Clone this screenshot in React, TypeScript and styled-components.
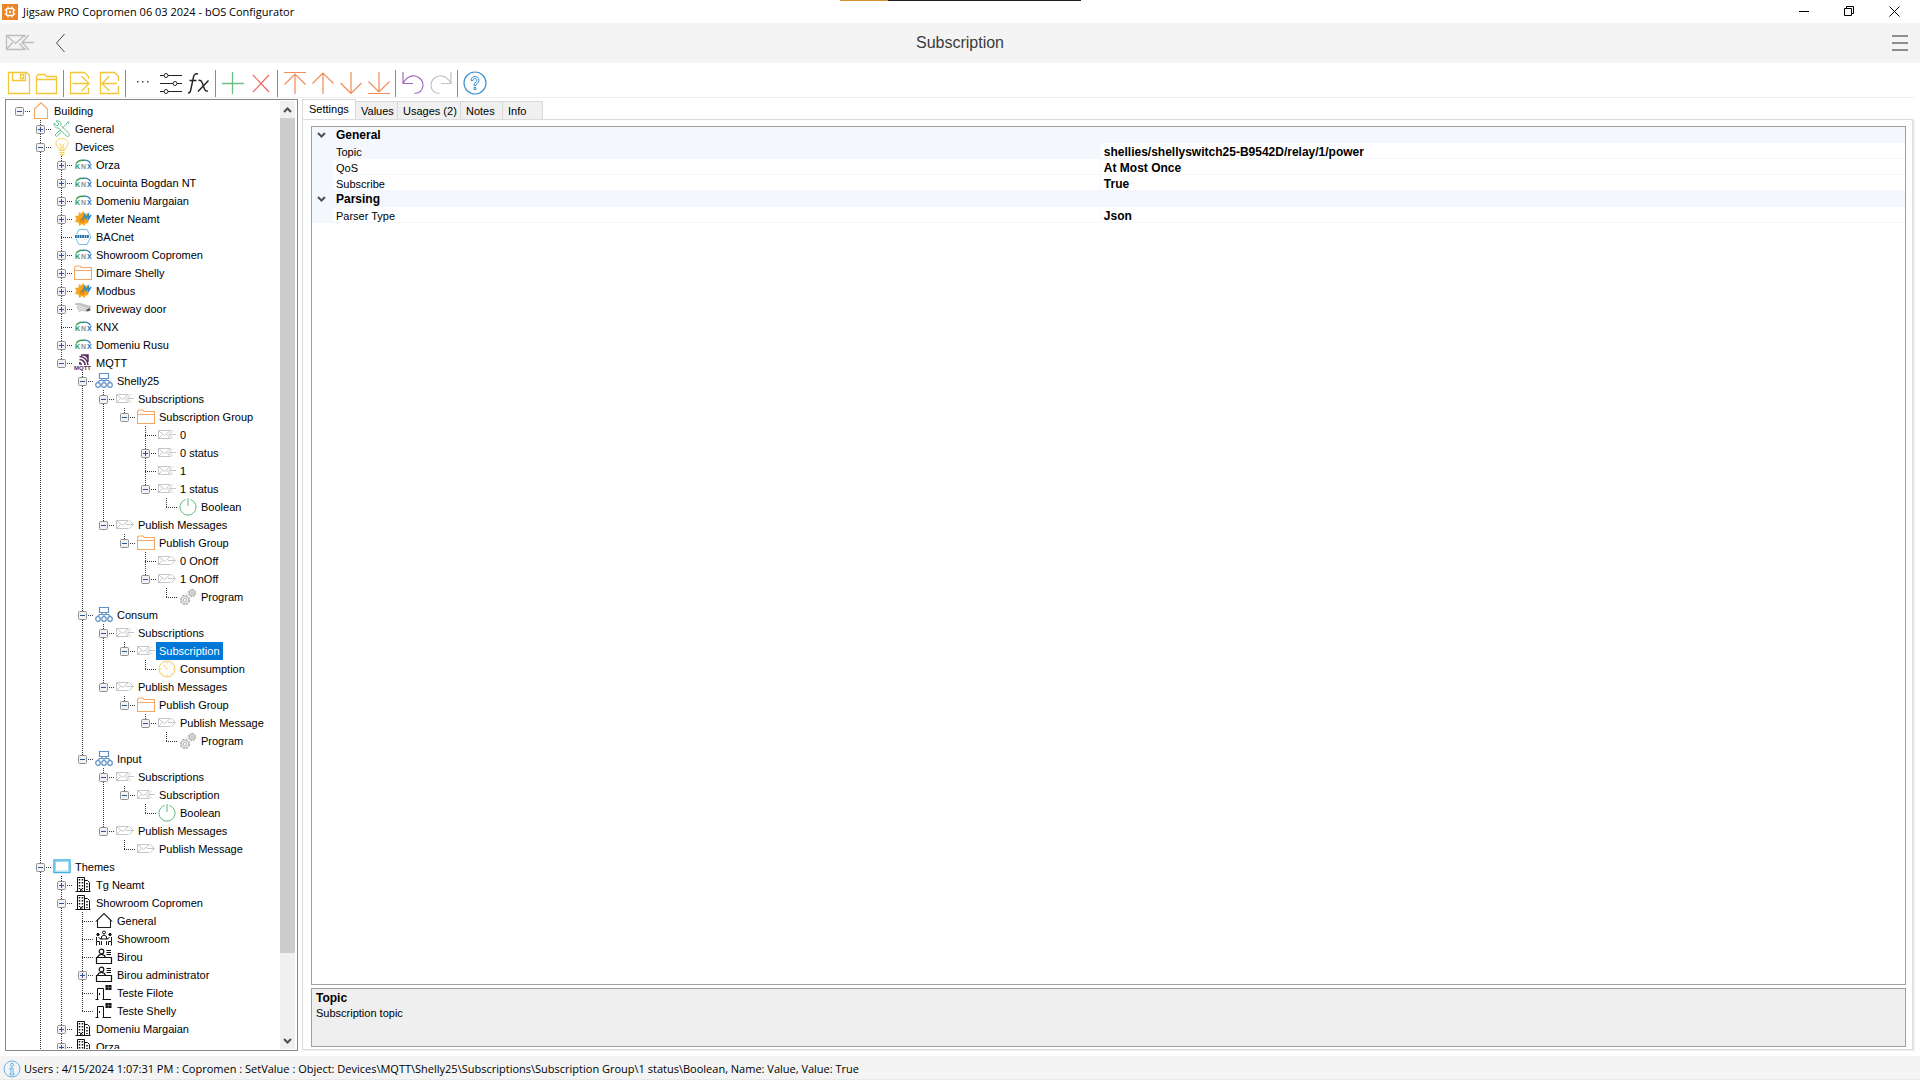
import React, { useState } from "react";
import styled, { createGlobalStyle, css } from "styled-components";

const uiFont = '"Liberation Sans", Arial, sans-serif';
const shellFont = '"Open Sans", "Noto Sans", sans-serif';

const GlobalStyle = createGlobalStyle`
  *, *::before, *::after { box-sizing: border-box; }
  html, body { margin: 0; padding: 0; }
  body { background: #ffffff; color: #000000; font-family: ${uiFont}; font-size: 11px; }
  button { font: inherit; color: inherit; background: none; border: 0; padding: 0; margin: 0; }
  ul { list-style: none; margin: 0; padding: 0; }
  svg { display: block; flex: none; }
`;

/* ---------- icons ---------- */

const Line = styled.svg<{ $color: string; $w?: number }>`
  fill: none;
  stroke: ${(p) => p.$color};
  stroke-width: ${(p) => p.$w ?? 1};
`;

const orange = "#f5a864";
const yellow = "#f4c636";
const arrow = "#f08b57";

const AppLogo = () => (
  <svg width="16" height="16" viewBox="0 0 16 16">
    <rect width="16" height="16" fill="#ee8322" />
    <rect x="4.5" y="4.5" width="7" height="7" rx="1" fill="none" stroke="#fff" strokeWidth="1.5" />
    <rect x="7" y="7" width="2" height="2" fill="#fff" />
    <path d="M6 2.5v2M10 2.5v2M6 11.5v2M10 11.5v2M2.5 6h2M2.5 10h2M11.5 6h2M11.5 10h2" stroke="#fff" strokeWidth="1.2" />
  </svg>
);

const MailInLarge = () => (
  <Line $color="#bdbdbd" $w={1.3} width="30" height="20" viewBox="0 0 30 20">
    <path d="M20 4V2.500H1.500v14H20V15M1.500 2.500l9 8 9-8M1.500 16.500l6-7M19.500 16.500l-5-6" />
    <path d="M29 9.500H18M24 2l-7 7.500 7 7.500" />
  </Line>
);

const BackChevron = () => (
  <Line $color="#4a4a4a" width="12" height="20" viewBox="0 0 12 20">
    <path d="M9.500 1L1.500 10l8 9" />
  </Line>
);

const MenuBars = () => (
  <Line $color="#8d8d8d" $w={2} width="16" height="18" viewBox="0 0 16 18">
    <path d="M0 2h16M0 9h16M0 16h16" />
  </Line>
);

const Minimize = () => (
  <Line $color="#000" width="11" height="11" viewBox="0 0 11 11"><path d="M0 5.500h10" /></Line>
);
const Restore = () => (
  <Line $color="#000" width="11" height="11" viewBox="0 0 11 11"><path d="M.5 2.500h7v7h-7zM2.500 2.500v-2h7v7h-2" /></Line>
);
const Close = () => (
  <Line $color="#000" width="11" height="11" viewBox="0 0 11 11"><path d="M.5.5l10 10M10.500.5l-10 10" /></Line>
);

/* toolbar icons share a 24px box */
const tb = { width: 24, height: 24, viewBox: "0 0 24 24" };

const SaveIcon = () => (
  <Line $color={yellow} $w={1.3} {...tb}>
    <path d="M1.500 1.500h18l3 3v18h-21z" />
    <path d="M5.500 1.500v8h13v-8M5.500 9.500h13M13.500 3.500h3v4h-3z" />
  </Line>
);
const OpenIcon = () => (
  <Line $color={yellow} $w={1.3} {...tb}>
    <path d="M1.500 22.500V5.500l2-2h6l2 2h10v17zM1.500 8.500h20" />
  </Line>
);
const ExportIcon = () => (
  <Line $color={yellow} $w={1.3} {...tb}>
    <path d="M19.500 8V5.500l-4-4h-14v21h18V17M3.500 12.500h16M12.500 5l7.500 7.500-7.500 7.500" />
  </Line>
);
const ImportIcon = () => (
  <Line $color={yellow} $w={1.3} {...tb}>
    <path d="M21.500 10V5.500l-4-4h-14v21h18V15M20 12.500H5M12.500 5L5 12.500l7.500 7.500" />
  </Line>
);
const DotsIcon = () => (
  <svg {...tb}><path d="M6 10h1.500v1.500H6zM11 10h1.500v1.500H11zM16 10h1.500v1.500H16z" fill="#444" /></svg>
);
const SlidersIcon = () => (
  <Line $color="#222" {...tb}>
    <path d="M1 4.500h4M9 4.500h14M1 12.500h13M18 12.500h5M1 20.500h4M9 20.500h14" />
    <circle cx="7" cy="4.500" r="2" /><circle cx="16" cy="12.500" r="2" /><circle cx="7" cy="20.500" r="2" />
  </Line>
);
const FxIcon = () => (
  <Line $color="#222" {...tb} $w={1.4}>
    <path d="M11 3c-2.500-1-4 .5-4.500 3L3.500 20c-.3 1.500-1 2-2.500 2M2.500 9.500h7" />
    <path d="M11.500 9.500c2-.6 3 .2 3.600 2l2.400 6.500c.7 2 1.700 2.500 3.500 2M21.500 9.500L11 20.500" />
  </Line>
);
const PlusIcon = () => (
  <Line $color="#67c07f" $w={1.3} {...tb}><path d="M11.500 1v22M1 12.500h22" /></Line>
);
const DeleteIcon = () => (
  <Line $color="#ec6155" $w={1.1} {...tb}><path d="M4 4l16 17M20 4L4 21" /></Line>
);
const TopIcon = () => (
  <Line $color={arrow} $w={1.200} {...tb}><path d="M1 1.500h22M12 23V3M1.500 13.500L12 3l10.500 10.500" /></Line>
);
const UpIcon = () => (
  <Line $color={arrow} $w={1.200} {...tb}><path d="M12 23V2M1.500 12.500L12 2l10.500 10.500" /></Line>
);
const DownIcon = () => (
  <Line $color={arrow} $w={1.200} {...tb}><path d="M12 1v21.500M1.500 12L12 22.500 22.500 12" /></Line>
);
const BottomIcon = () => (
  <Line $color={arrow} $w={1.200} {...tb}><path d="M1 22.500h22M12 1v20M1.500 10.500L12 21l10.500-10.500" /></Line>
);
const UndoIcon = () => (
  <Line $color="#9d6cbc" $w={1.200} {...tb}>
    <path d="M2 1v11.500h10M2 12.500C5 7 9 4 14 5c5 1 8.500 5 8 10-.5 4-3 7-8.500 7.500" />
  </Line>
);
const RedoIcon = () => (
  <Line $color="#c2c2c2" $w={1.200} {...tb}>
    <path d="M22 1v11.500H12M22 12.500C19 7 15 4 10 5c-5 1-8.500 5-8 10 .5 4 3 7 8.500 7.500" />
  </Line>
);
const HelpIcon = () => (
  <Line $color="#3f93d1" $w={1.200} {...tb}>
    <circle cx="12" cy="12" r="11" />
    <path d="M8 9.500c0-2.500 1.700-4 4-4s4 1.500 4 3.800c0 2.700-3 3-3 5.200h-2c0-3.500 3-3.500 3-5.200 0-1-.8-1.800-2-1.800s-2 .8-2 2zM11 16.500h2v2h-2z" strokeWidth="1" />
  </Line>
);
const InfoIcon = () => (
  <Line $color="#6db3e4" width="18" height="18" viewBox="0 0 18 18">
    <circle cx="9" cy="9" r="8" />
    <circle cx="9" cy="4.800" r="1.500" />
    <path d="M7 8h3v5.500h1v1.500H7v-1.500h1V9.500H7z" />
  </Line>
);

/* tree icons share an 18px box */
const tr = { width: 18, height: 18, viewBox: "0 0 18 18" };

const Home = () => (
  <Line $color={orange} $w={1.100} {...tr}><path d="M2.500 16.500V7L9 .8 15.500 7v9.500z" /></Line>
);
const House = () => (
  <Line $color="#222" $w={1.100} {...tr}><path d="M2.500 15.500V9H1.500L9 1.500 16.500 9h-1v6.500z" /></Line>
);
const Tools = () => (
  <Line $color="#62c492" {...tr}>
    <path d="M1 3l3 3 2-2-3-3c3-.8 5.500 1 5 4.500l8 8c1.500 2-1 4-2.700 2.500L5.500 8C2.500 8.500.5 6 1 3z" />
    <path d="M16.500 1.500l-2.500 1-1 2-4 4M8 10l-2 1-4 4 1.500 1.500 4.500-4M14 2l2 2" />
  </Line>
);
const Bulb = () => (
  <Line $color="#f8cf50" {...tr}>
    <path d="M6.500 12.500c0-3-3.500-3.500-3.500-7C3 2.500 5.500.5 9 .5s6 2 6 5c0 3.500-3.500 4-3.500 7zM6.500 14.500h5M6.500 16.500h5M8 17.500h2M8 12V7L6.500 5.500M10 12V7l1.500-1.500" />
  </Line>
);
const LogoText = styled.text<{ $size: number }>`
  font-family: ${uiFont};
  font-size: ${(p) => p.$size}px;
  font-weight: 700;
`;
const Knx = () => (
  <svg {...tr}>
    <path d="M2 7.500C4 4.500 7 3.800 10 4.500" fill="none" stroke="#3c9a55" strokeWidth="1.300" />
    <path d="M9 4.300c3.500-.6 6 .5 7.500 3.200" fill="none" stroke="#2c7fb5" strokeWidth="1.300" />
    <LogoText $size={7} x="1" y="13" fill="#2f9148">K</LogoText>
    <LogoText $size={7} x="7" y="13" fill="#8d9297">N</LogoText>
    <LogoText $size={7} x="13" y="13" fill="#1f6fb0">X</LogoText>
  </svg>
);
const Modbus = () => (
  <svg {...tr}>
    <path d="M5 2l2 1.500L9 1l1.500 3L14 3l-.5 3.500 3 1.500-2.500 2 .5 3-3 .5L10.500 16 8 14l-3 2-.5-3.500L1 12l1.500-3L1 6l3.500-.5z" fill="#f5a623" />
    <circle cx="8" cy="10" r="2.500" fill="#e08a14" />
    <path d="M9 9.500l1.500-5 1.500 4 2.500-4v4.500l2.500-4" fill="none" stroke="#2b8fd0" strokeWidth="1.500" />
  </svg>
);
const Bacnet = () => (
  <svg {...tr}>
    <path d="M5 1.500h8L17 9l-4 7.500H5L1 9z" fill="#fff" stroke="#6cbfea" />
    <rect x="0" y="6" width="15" height="5" fill="#fff" />
    <path d="M1 8.500h14" stroke="#1f6fa8" strokeWidth="3" strokeDasharray="1.800 .6" />
  </svg>
);
const Folder = () => (
  <Line $color={orange} $w={1.1} {...tr}><path d="M.5 15.500v-12l1.500-1.500h4l1.500 1.500h10v12zM.5 6.500h17" /></Line>
);
const Camera = () => (
  <svg {...tr}>
    <path d="M1 4l4-.8 12 3.300-2 2z" fill="#c9c9c9" stroke="#aaa" strokeWidth=".6" />
    <path d="M3 6.500l9 2.500 1 2.500-9-2z" fill="#e2e2e2" stroke="#aaa" strokeWidth=".6" />
    <path d="M12 9.500l4-1.500.5 2.500-3 1z" fill="#555" />
    <path d="M7 10.500l-3 1.500" stroke="#c4c4c4" />
  </svg>
);
const Mqtt = () => (
  <svg {...tr}>
    <path d="M5 10.500V8a3 3 0 013 3z" fill="#5b2a60" />
    <path d="M5.500 5.500a5.500 5.500 0 015.500 5.500M5.500 2.500A8.500 8.500 0 0114 11M7 1h7v7" fill="none" stroke="#5b2a60" strokeWidth="1.500" />
    <path d="M10 1h4v4z" fill="#5b2a60" />
    <LogoText $size={6} x="0" y="16" fill="#5b2a60">MQTT</LogoText>
  </svg>
);
const Network = () => (
  <Line $color="#6190c8" $w={1.200} {...tr}>
    <path d="M4.500 1.500h9v5h-9zM7 7v1.500M11 7v1.500M2.500 10.500l2-2h9l2 2M9 8.500v2" />
    <circle cx="3" cy="13" r="2.300" /><circle cx="9" cy="13" r="2.300" /><circle cx="15" cy="13" r="2.300" />
  </Line>
);
const MailIn = () => (
  <Line $color="#c6c6c6" {...tr}>
    <path d="M12.500 4.500H.5v8h12M.5 4.500l6 5 6-5M.5 12.500l4-4M12 12.500l-3-4M18 8.500h-6M15 4.500l-4 4 4 4" />
  </Line>
);
const MailOut = () => (
  <Line $color="#c6c6c6" {...tr}>
    <path d="M12 4.500H.5v8h12M.5 4.500l6 5 6-5M.5 12.500l4-4M10 8.500h7M13.500 4.500l4 4-4 4" />
  </Line>
);
const Power = () => (
  <Line $color="#5fb67c" {...tr}><path d="M6.500 1.500a8 8 0 105 0M9 0v8" /></Line>
);
const Gauge = () => (
  <Line $color="#f3cd5c" {...tr}>
    <circle cx="9" cy="9" r="8" />
    <path d="M9.500 9.500L5.500 5M8 9l1-1M9 2v1.500M9 14.500V16M2 9h1.500M14.500 9H16M13 4.500l1-1M4 14l1-1M13 13l1 1" />
  </Line>
);
const Gears = () => (
  <Line $color="#aeada9" {...tr}>
    <circle cx="6" cy="12" r="1.800" />
    <circle cx="6" cy="12" r="3.800" />
    <circle cx="6" cy="12" r="4.800" strokeDasharray="2.200 1.570" />
    <circle cx="13" cy="5" r="1.200" />
    <circle cx="13" cy="5" r="2.800" />
    <circle cx="13" cy="5" r="3.800" strokeDasharray="1.800 1.180" />
  </Line>
);
const Screen = () => (
  <svg {...tr}>
    <rect x="1" y="2" width="16" height="12.5" fill="#fff" stroke="#45b3e6" strokeWidth="1.500" />
    <rect x="2.500" y="3.500" width="13" height="9.500" fill="none" stroke="#9fd8f2" />
  </svg>
);
const Building = () => (
  <Line $color="#111" {...tr}>
    <path d="M3.500 15.500v-14h7v14M1.500 15.500h15M10.500 4.500h3l2 2v9" />
    <path d="M5.500 3v10M8.500 3v10M13 7v7" strokeDasharray="1.500 1.500" strokeWidth="1.500" />
    <path d="M6.500 15.500v-2h1.500v2" />
  </Line>
);
const Meeting = () => (
  <Line $color="#111" {...tr}>
    <circle cx="9" cy="2.500" r="1.500" /><circle cx="3" cy="4.500" r="1.200" fill="#111" /><circle cx="15" cy="4.500" r="1.200" fill="#111" />
    <path d="M6.500 9V6.500L9 5l2.500 1.500V9M5.500 9h7M1.500 7v4.500h3V15M16.500 7v4.500h-3V15M1.500 12v3.500M16.500 12v3.500M6.500 11v4M11.500 11v4M3.500 7.500L6 9M14.500 7.500L12 9" />
  </Line>
);
const Desk = () => (
  <Line $color="#111" $w={1.200} {...tr}>
    <circle cx="6.500" cy="3.500" r="2.300" />
    <path d="M2.500 9.500C3 7.500 5 6.500 6.500 6.500s3.500 1 4 3M1.500 9.500h15v6h-15zM11.500 2.500H16M11.500 4.500H16M11.500 6.500H16" />
  </Line>
);
const Door = () => (
  <Line $color="#111" {...tr}>
    <path d="M2.500 15.500v-11h6v11M.5 15.500h3M7.500 15.500H16M4.500 9v2" />
    <rect x="10.500" y="1" width="6" height="5" fill="#111" stroke="none" />
    <path d="M11.500 3.500h5M13.500 1v5" stroke="#888" strokeWidth=".6" />
  </Line>
);

const treeIcons = {
  home: <Home />, house: <House />, tools: <Tools />, bulb: <Bulb />,
  knx: <Knx />, modbus: <Modbus />, bacnet: <Bacnet />, folder: <Folder />, camera: <Camera />,
  mqtt: <Mqtt />, network: <Network />, mailIn: <MailIn />, mailOut: <MailOut />, power: <Power />,
  gauge: <Gauge />, gears: <Gears />, screen: <Screen />, building: <Building />,
  meeting: <Meeting />, desk: <Desk />, door: <Door />,
};

/* ---------- tree data ---------- */

type Node = {
  label: string;
  icon: keyof typeof treeIcons;
  closed?: boolean;
  selected?: boolean;
  more?: boolean;
  children?: Node[];
};

const n = (icon: Node["icon"], label: string, children?: Node[], extra?: Partial<Node>): Node => ({
  icon, label, children, ...extra,
});
const closed = (icon: Node["icon"], label: string, extra?: Partial<Node>): Node => ({
  icon, label, closed: true, ...extra,
});

const tree: Node[] = [
  n("home", "Building", [
    closed("tools", "General"),
    n("bulb", "Devices", [
      closed("knx", "Orza"),
      closed("knx", "Locuinta Bogdan NT"),
      closed("knx", "Domeniu Margaian"),
      closed("modbus", "Meter Neamt"),
      n("bacnet", "BACnet"),
      closed("knx", "Showroom Copromen"),
      closed("folder", "Dimare Shelly"),
      closed("modbus", "Modbus"),
      closed("camera", "Driveway door"),
      n("knx", "KNX"),
      closed("knx", "Domeniu Rusu"),
      n("mqtt", "MQTT", [
        n("network", "Shelly25", [
          n("mailIn", "Subscriptions", [
            n("folder", "Subscription Group", [
              n("mailIn", "0"),
              closed("mailIn", "0 status"),
              n("mailIn", "1"),
              n("mailIn", "1 status", [n("power", "Boolean")]),
            ]),
          ]),
          n("mailOut", "Publish Messages", [
            n("folder", "Publish Group", [
              n("mailOut", "0 OnOff"),
              n("mailOut", "1 OnOff", [n("gears", "Program")]),
            ]),
          ]),
        ]),
        n("network", "Consum", [
          n("mailIn", "Subscriptions", [
            n("mailIn", "Subscription", [n("gauge", "Consumption")], { selected: true }),
          ]),
          n("mailOut", "Publish Messages", [
            n("folder", "Publish Group", [
              n("mailOut", "Publish Message", [n("gears", "Program")]),
            ]),
          ]),
        ]),
        n("network", "Input", [
          n("mailIn", "Subscriptions", [n("mailIn", "Subscription", [n("power", "Boolean")])]),
          n("mailOut", "Publish Messages", [n("mailOut", "Publish Message")]),
        ]),
      ]),
    ]),
    n("screen", "Themes", [
      closed("building", "Tg Neamt"),
      n("building", "Showroom Copromen", [
        n("house", "General"),
        n("meeting", "Showroom"),
        n("desk", "Birou"),
        closed("desk", "Birou administrator"),
        n("door", "Teste Filote"),
        n("door", "Teste Shelly"),
      ]),
      closed("building", "Domeniu Margaian"),
      closed("building", "Orza", { more: true }),
    ], { more: true }),
  ]),
];

/* ---------- window frame ---------- */

const Window = styled.div`
  display: flex;
  flex-direction: column;
  height: 100vh;
  overflow: hidden;
  background: #ffffff;
`;

const TitleBar = styled.header`
  position: relative;
  display: flex;
  align-items: center;
  height: 23px;
  padding: 0 3px 0 2px;
  font-family: ${shellFont};
  &::before {
    content: "";
    position: absolute;
    top: 0;
    left: calc(50% - 120px);
    width: 241px;
    height: 1px;
    background: linear-gradient(to right, #d18d2f 48px, #1d1d1d 48px);
  }
`;

const WindowTitle = styled.div`
  flex: 1;
  padding-left: 5px;
  white-space: nowrap;
`;

const CaptionButton = styled.button`
  display: flex;
  align-items: center;
  justify-content: center;
  width: 45px;
  height: 20px;
`;

const NavBar = styled.nav`
  display: grid;
  grid-template-columns: 1fr auto 1fr;
  align-items: center;
  height: 40px;
  padding: 0 5px;
  background: #f4f4f4;
`;

const NavSide = styled.div<{ $end?: boolean }>`
  display: flex;
  align-items: center;
  gap: 20px;
  padding-right: 7px;
  justify-content: ${(p) => (p.$end ? "flex-end" : "flex-start")};
`;

const PageTitle = styled.h1`
  margin: 0;
  font-size: 16px;
  font-weight: 400;
  color: #3c3c3c;
`;

const Toolbar = styled.div`
  display: flex;
  align-items: flex-end;
  height: 35px;
  margin-right: 5px;
  padding-left: 5px;
  border-bottom: 1px solid #f0f0f0;
`;

const ToolButton = styled.button`
  display: flex;
  align-items: center;
  justify-content: center;
  width: 28px;
  height: 28px;
`;

const ToolSeparator = styled.div`
  width: 1px;
  height: 27px;
  margin: 0 3px 0 2px;
  background: #8c8c8c;
`;

const Workspace = styled.main`
  display: flex;
  flex: 1;
  gap: 4px;
  min-height: 0;
  padding: 1px 5px 5px;
`;

/* ---------- tree ---------- */

const TreePanel = styled.aside`
  display: flex;
  flex: none;
  width: 293px;
  border: 1px solid #828790;
  padding: 1px 2px 1px 1px;
`;

const TreeScroll = styled.div`
  flex: 1;
  overflow: hidden;
  padding: 1px 0 0 2px;
`;

const TreeRow = styled.li`
  display: flex;
  align-items: center;
  height: 18px;
`;

const dots = (dir: string) => `repeating-linear-gradient(${dir}, #333 0 1px, transparent 1px 2px)`;

const Guide = styled.span<{ $up?: boolean; $down?: boolean; $across?: boolean }>`
  display: flex;
  align-items: center;
  justify-content: center;
  flex: none;
  width: 21px;
  height: 18px;
  background-repeat: no-repeat;
  ${(p) => css`
    background-image: ${dots("to bottom")}, ${dots("to bottom")}, ${dots("to right")};
    background-position: 10px 0, 10px 10px, 10px 9px;
    background-size: 1px ${p.$up ? 10 : 0}px, 1px ${p.$down ? 8 : 0}px, ${p.$across ? 11 : 0}px 1px;
  `}
`;

const Toggle = styled.button`
  margin-top: 1px;
  width: 9px;
  height: 9px;
`;

const ToggleGlyph = ({ open }: { open: boolean }) => (
  <svg width="9" height="9" viewBox="0 0 9 9">
    <rect x=".5" y=".5" width="8" height="8" rx="1" fill="#f2f2f2" stroke="#919191" />
    <path d={open ? "M2 4.500h5" : "M2 4.500h5M4.500 2v5"} stroke="#33509c" />
  </svg>
);

const NodeIcon = styled.span`
  flex: none;
  width: 18px;
  height: 18px;
  margin: 0 1px 0 2px;
`;

const NodeLabel = styled.span<{ $selected?: boolean }>`
  height: 18px;
  padding: 0 3px;
  line-height: 18px;
  white-space: nowrap;
  background: ${(p) => (p.$selected ? "#0078d7" : "transparent")};
  color: ${(p) => (p.$selected ? "#ffffff" : "#000000")};
`;

const ScrollBar = styled.div`
  display: flex;
  flex-direction: column;
  width: 15px;
  background: #f0f0f0;
`;

const ScrollArrow = styled.button`
  display: flex;
  align-items: center;
  justify-content: center;
  height: 17px;
`;

const ScrollTrack = styled.div`
  display: grid;
  flex: 1;
  grid-template-rows: 21fr 2fr;
`;

const ScrollThumb = styled.div`
  background: #cdcdcd;
`;

const Chevron = ({ up }: { up?: boolean }) => (
  <Line $color="#505050" $w={2} width="9" height="6" viewBox="0 0 9 6">
    <path d={up ? "M1 5l3.500-3.500L8 5" : "M1 1l3.500 3.500L8 1"} />
  </Line>
);

function Branch({ nodes, lines, path }: { nodes: Node[]; lines: boolean[]; path: string }) {
  return (
    <>
      {nodes.map((node, i) => (
        <Item
          key={path + i}
          node={node}
          lines={lines}
          path={`${path}${i}.`}
          last={i === nodes.length - 1 && !node.more}
        />
      ))}
    </>
  );
}

function Item({ node, lines, path, last }: { node: Node; lines: boolean[]; path: string; last: boolean }) {
  const [open, setOpen] = useState(!node.closed);
  const expandable = node.closed || !!node.children;
  return (
    <>
      <TreeRow role="treeitem" aria-level={lines.length + 1} aria-selected={!!node.selected}>
        {lines.map((on, i) => (
          <Guide key={i} $up={on} $down={on} />
        ))}
        <Guide $up={lines.length > 0} $down={!last} $across>
          {expandable && (
            <Toggle aria-label={node.label} aria-expanded={open} onClick={() => setOpen(!open)}>
              <ToggleGlyph open={open} />
            </Toggle>
          )}
        </Guide>
        <NodeIcon>{treeIcons[node.icon]}</NodeIcon>
        <NodeLabel $selected={node.selected}>{node.label}</NodeLabel>
      </TreeRow>
      {open && node.children && <Branch nodes={node.children} lines={[...lines, !last]} path={path} />}
    </>
  );
}

/* ---------- property panel ---------- */

const Detail = styled.section`
  display: flex;
  flex: 1;
  flex-direction: column;
  min-width: 0;
`;

const TabStrip = styled.div`
  display: flex;
  align-items: flex-end;
  height: 20px;
`;

const Tab = styled.button<{ $active?: boolean; $width: number }>`
  min-width: ${(p) => p.$width}px;
  height: ${(p) => (p.$active ? 21 : 18)}px;
  margin-bottom: ${(p) => (p.$active ? -1 : 0)}px;
  padding: ${(p) => (p.$active ? "0 5px 2px 6px" : "0 3px 0 5px")};
  border: 1px solid #d9d9d9;
  border-bottom: 0;
  border-left-width: ${(p) => (p.$active ? 1 : 0)}px;
  background: ${(p) => (p.$active ? "#ffffff" : "#f0f0f0")};
  text-align: left;
  white-space: nowrap;
`;

const tabWidths = { Settings: 54, Values: 42, "Usages (2)": 63, Notes: 42, Info: 40 };

const TabPage = styled.div`
  display: flex;
  flex: 1;
  flex-direction: column;
  gap: 3px;
  min-height: 0;
  padding: 6px 6px 2px 8px;
  border: 1px solid #dcdcdc;
  box-shadow: 2px 1px 0 #f0f0f0;
  margin: 0 2px 1px 0;
`;

const GridPane = styled.div`
  flex: 1;
  min-height: 0;
  border: 1px solid #a0a0a0;
`;

const PropertyTable = styled.table`
  width: 100%;
  table-layout: fixed;
  border-collapse: separate;
  border-spacing: 0;
  text-align: left;
`;

const GutterCol = styled.col`
  width: 21px;
`;
const NameCol = styled.col`
  width: 48.2%;
`;

const Gutter = styled.td`
  height: 16px;
  padding: 0 0 0 5px;
  background: #f4f7fc;
`;

const CategoryCell = styled.th`
  height: 16px;
  padding: 0 3px;
  background: #f4f7fc;
  line-height: 15px;
  font-size: 12px;
  font-weight: 700;
`;

const NameCell = styled.th<{ $active?: boolean }>`
  height: 16px;
  padding: 3px 3px 0;
  border-right: 1px solid #f4f7fc;
  border-bottom: 1px solid #f4f7fc;
  background: ${(p) => (p.$active ? "#f4f7fc" : "#ffffff")};
  line-height: 12px;
  font-weight: 400;
`;

const ValueCell = styled.td`
  height: 16px;
  padding: 3px 3px 0;
  border-bottom: 1px solid #f4f7fc;
  line-height: 12px;
  font-size: 12px;
  font-weight: 700;
`;

const HelpPane = styled.div`
  height: 59px;
  padding: 2px 4px;
  border: 1px solid #a0a0a0;
  background: #efefef;
  line-height: 15px;
`;

const HelpTitle = styled.div`
  font-size: 12px;
  font-weight: 700;
`;

const StatusBar = styled.footer`
  display: flex;
  align-items: center;
  gap: 3px;
  height: 24px;
  padding: 2px 3px 0;
  border-bottom: 1px solid #e9e9e9;
  background: #f4f4f4;
  font-family: ${shellFont};
  white-space: nowrap;
`;

const properties = [
  {
    category: "General",
    rows: [
      ["Topic", "shellies/shellyswitch25-B9542D/relay/1/power"],
      ["QoS", "At Most Once"],
      ["Subscribe", "True"],
    ],
  },
  { category: "Parsing", rows: [["Parser Type", "Json"]] },
];

const tools: { name: string; icon: React.ReactNode }[][] = [
  [{ name: "Save", icon: <SaveIcon /> }, { name: "Open", icon: <OpenIcon /> }],
  [{ name: "Export", icon: <ExportIcon /> }, { name: "Import", icon: <ImportIcon /> }],
  [
    { name: "More", icon: <DotsIcon /> },
    { name: "Options", icon: <SlidersIcon /> },
    { name: "Function", icon: <FxIcon /> },
  ],
  [{ name: "Add", icon: <PlusIcon /> }, { name: "Delete", icon: <DeleteIcon /> }],
  [
    { name: "Move to top", icon: <TopIcon /> },
    { name: "Move up", icon: <UpIcon /> },
    { name: "Move down", icon: <DownIcon /> },
    { name: "Move to bottom", icon: <BottomIcon /> },
  ],
  [{ name: "Undo", icon: <UndoIcon /> }, { name: "Redo", icon: <RedoIcon /> }],
  [{ name: "Help", icon: <HelpIcon /> }],
];

export default function App() {
  const [tab, setTab] = useState("Settings");
  return (
    <>
      <GlobalStyle />
      <Window>
        <TitleBar>
          <AppLogo />
          <WindowTitle>Jigsaw PRO Copromen 06 03 2024 - bOS Configurator</WindowTitle>
          <CaptionButton aria-label="Minimize"><Minimize /></CaptionButton>
          <CaptionButton aria-label="Restore"><Restore /></CaptionButton>
          <CaptionButton aria-label="Close"><Close /></CaptionButton>
        </TitleBar>
        <NavBar>
          <NavSide>
            <MailInLarge />
            <button aria-label="Back"><BackChevron /></button>
          </NavSide>
          <PageTitle>Subscription</PageTitle>
          <NavSide $end>
            <button aria-label="Menu"><MenuBars /></button>
          </NavSide>
        </NavBar>
        <Toolbar role="toolbar">
          {tools.map((group, g) => (
            <React.Fragment key={g}>
              {g > 0 && <ToolSeparator />}
              {group.map((t) => (
                <ToolButton key={t.name} aria-label={t.name}>{t.icon}</ToolButton>
              ))}
            </React.Fragment>
          ))}
        </Toolbar>
        <Workspace>
          <TreePanel>
            <TreeScroll>
              <ul role="tree">
                <Branch nodes={tree} lines={[]} path="" />
              </ul>
            </TreeScroll>
            <ScrollBar>
              <ScrollArrow aria-label="Scroll up"><Chevron up /></ScrollArrow>
              <ScrollTrack><ScrollThumb /></ScrollTrack>
              <ScrollArrow aria-label="Scroll down"><Chevron /></ScrollArrow>
            </ScrollBar>
          </TreePanel>
          <Detail>
            <TabStrip role="tablist">
              {Object.entries(tabWidths).map(([name, width]) => (
                <Tab
                  key={name}
                  role="tab"
                  aria-selected={tab === name}
                  $active={tab === name}
                  $width={width}
                  onClick={() => setTab(name)}
                >
                  {name}
                </Tab>
              ))}
            </TabStrip>
            <TabPage role="tabpanel">
              <GridPane>
                <PropertyTable>
                  <colgroup><GutterCol /><NameCol /><col /></colgroup>
                  {properties.map((group) => (
                    <tbody key={group.category}>
                      <tr>
                        <Gutter><Chevron /></Gutter>
                        <CategoryCell colSpan={2} scope="rowgroup">{group.category}</CategoryCell>
                      </tr>
                      {group.rows.map(([name, value]) => (
                        <tr key={name}>
                          <Gutter />
                          <NameCell scope="row" $active={name === "Topic"}>{name}</NameCell>
                          <ValueCell>{value}</ValueCell>
                        </tr>
                      ))}
                    </tbody>
                  ))}
                </PropertyTable>
              </GridPane>
              <HelpPane>
                <HelpTitle>Topic</HelpTitle>
                <div>Subscription topic</div>
              </HelpPane>
            </TabPage>
          </Detail>
        </Workspace>
        <StatusBar>
          <InfoIcon />
          <span>
            {"Users : 4/15/2024 1:07:31 PM : Copromen : SetValue : Object: Devices\\MQTT\\Shelly25\\Subscriptions\\Subscription Group\\1 status\\Boolean, Name: Value, Value: True"}
          </span>
        </StatusBar>
      </Window>
    </>
  );
}
